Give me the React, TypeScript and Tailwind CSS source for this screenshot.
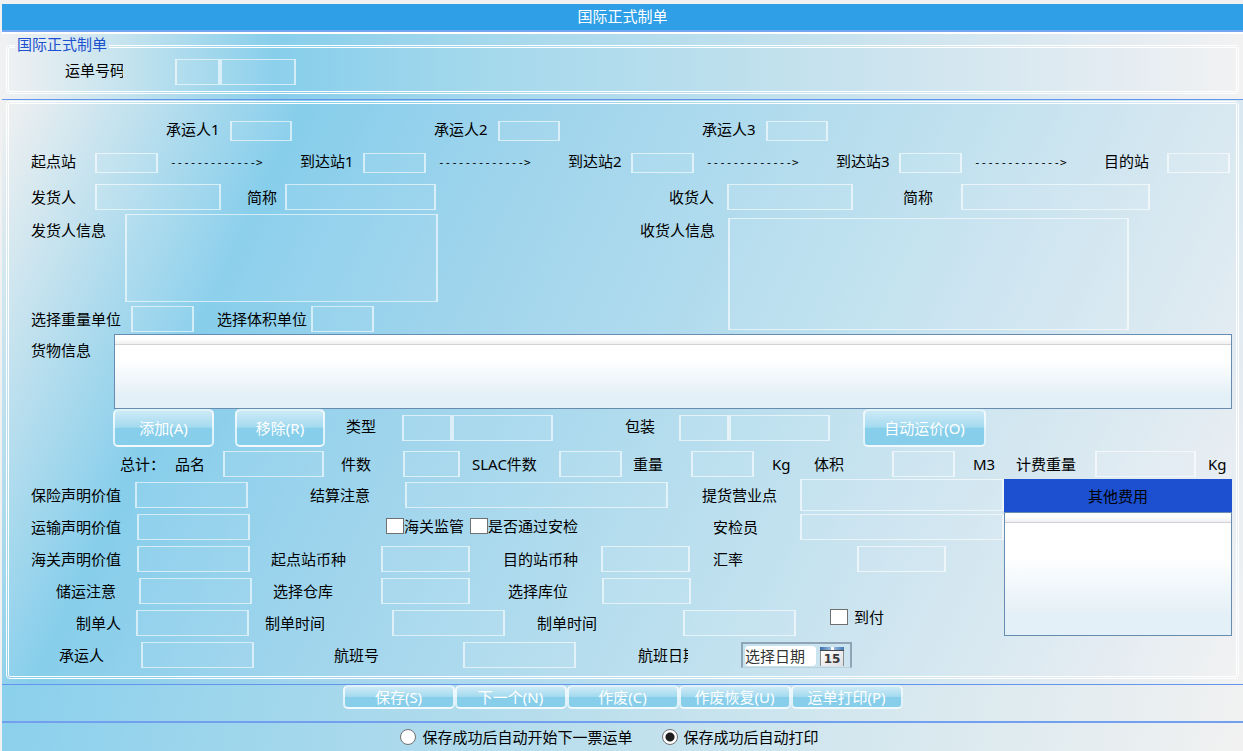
import { useId, useState } from 'react';
import type { ReactNode } from 'react';
import clsx from 'clsx';

const FIELD = 'block w-full min-w-0 border-x-2 border-y border-white/60 bg-white/5 px-1 text-[15px] leading-5 outline-none';

function Field({ label }: { label: string }) {
  return <input type="text" aria-label={label} className={clsx(FIELD, 'h-[26px]')} />;
}

function Pair({ label, className, cut, children, short, tall }: {
  label: string; className?: string; cut?: boolean; children?: ReactNode; short?: boolean; tall?: boolean;
}) {
  const id = useId();
  return (
    <>
      <label htmlFor={id} className={clsx('whitespace-nowrap', short && 'h-5 leading-4', className)}>
        <span className={clsx('block', cut && 'w-[50px] overflow-hidden')}>{label}</span>
      </label>
      {children ?? <input id={id} type="text" className={clsx(FIELD, short ? 'h-5' : tall ? 'h-8' : 'h-[26px]')} />}
    </>
  );
}

function Area({ label, className, height }: { label: string; className?: string; height: string }) {
  const id = useId();
  return (
    <>
      <label htmlFor={id} className={clsx('whitespace-nowrap', className)}>{label}</label>
      <textarea id={id} className={clsx(FIELD, 'resize-none', height)} />
    </>
  );
}

function Check({ label, gap }: { label: string; gap?: boolean }) {
  return (
    <label className={clsx('flex items-center whitespace-nowrap', gap && 'gap-1.5')}>
      <input type="checkbox" className="h-4 w-[18px] shrink-0 appearance-none border border-[#707070] bg-white checked:bg-[#2f9fe7]" />
      {label}
    </label>
  );
}

function GlassButton({ children, className }: { children: ReactNode; className?: string }) {
  return (
    <button
      type="button"
      className={clsx(
        'rounded-[5px] border-2 border-white/75 bg-[linear-gradient(to_bottom,#cdeaf6_0%,#a3daef_48%,#87ceeb_50%,#87ceeb_100%)] whitespace-nowrap text-white',
        className,
      )}
    >
      {children}
    </button>
  );
}

function Listing({ label, className }: { label: string; className?: string }) {
  return (
    <div
      role="region"
      aria-label={label}
      className={clsx('border border-[#688caf] bg-[linear-gradient(to_bottom,#ffffff_35%,#e4f0f7_82%)]', className)}
    >
      <div className="h-[10px] border-b border-[#d0d2d6] bg-[linear-gradient(to_bottom,#ffffff_40%,#eeeff1)]" />
    </div>
  );
}

function Arrow() {
  return <span className="pl-3 font-['DejaVu_Sans_Mono',monospace] text-[11px] whitespace-nowrap">{'------------->'}</span>;
}

function DateBox({ id }: { id: string }) {
  return (
    <div className="flex h-[26px] items-center border-2 border-b border-[#8fa5b5] border-b-[#bdd0da] pr-1.5 pl-0.5">
      <input id={id} type="text" aria-label="航班日期" placeholder="选择日期" className="h-5 w-full min-w-0 rounded-sm bg-white text-[15px] leading-5 outline-none placeholder:text-[#333]" />
      <button type="button" aria-label="打开日历" className="ml-1 shrink-0">
        <svg width="24" height="20" viewBox="0 0 24 20">
          <defs>
            <linearGradient id="cal-top" x1="0" y1="0" x2="1" y2="0">
              <stop offset="0" stopColor="#3a6fae" />
              <stop offset="0.5" stopColor="#9fc1e2" />
              <stop offset="1" stopColor="#4178b5" />
            </linearGradient>
            <linearGradient id="cal-page" x1="0" y1="0" x2="1" y2="1">
              <stop offset="0" stopColor="#fff" />
              <stop offset="1" stopColor="#dcdde2" />
            </linearGradient>
          </defs>
          <rect x="0" y="1" width="24" height="19" fill="#8c8c8c" />
          <rect x="1" y="5" width="22" height="15" fill="url(#cal-page)" />
          <rect x="0" y="1" width="24" height="3" fill="url(#cal-top)" />
          <rect x="0" y="4" width="24" height="1" fill="#4b4b4b" />
          <rect x="11" y="1" width="3" height="3" fill="#fff" />
          <text x="12" y="17" textAnchor="middle" fontSize="12" fontWeight="700" fontFamily="DejaVu Sans, sans-serif" fill="#3a3a3a">15</text>
        </svg>
      </button>
    </div>
  );
}

const ROW = 'grid items-center';

const ACTIONS = ['保存(S)', '下一个(N)', '作废(C)', '作废恢复(U)', '运单打印(P)'];

const AFTER_SAVE = [
  { value: 'next', label: '保存成功后自动开始下一票运单' },
  { value: 'print', label: '保存成功后自动打印' },
];

function Header() {
  return (
    <section className="bg-[linear-gradient(to_right,#f0f1f2_0%,#c4e3ee_10%,#87ceeb_22%,#a3d8ec_38%,#c3e1ed_64%,#e4ecf2_90%,#f2f2f2_100%)] px-1 pt-1 pb-[5px]">
      <fieldset className="h-[56px] rounded border-3 border-double border-white px-1.5">
        <legend className="h-4 px-0.5 leading-3 text-[#1c50d0]">国际正式制单</legend>
        <div className={clsx(ROW, 'mt-[5px] grid-cols-[110px_45px_76px] pl-[50px]')}>
          <label htmlFor="waybill-no" className="w-[58px] overflow-hidden pb-1 whitespace-nowrap">运单号码</label>
          <input id="waybill-no" type="text" className={clsx(FIELD, 'h-[26px]')} />
          <Field label="运单号码后段" />
        </div>
      </fieldset>
    </section>
  );
}

function Routing() {
  return (
    <>
      <div className={clsx(ROW, 'mt-[17px] grid-cols-[199px_62fr_206px_62fr_206px_62fr_404fr]')}>
        <Pair label="承运人1" className="pl-[135px]" short />
        <Pair label="承运人2" className="pl-[142px]" short />
        <Pair label="承运人3" className="pl-[142px]" short />
      </div>
      <div className={clsx(ROW, 'mt-3 grid-cols-[64px_63fr_142px_63px_63fr_142px_63px_63fr_142px_63px_63fr_142px_63px_63fr] pr-0.5')}>
        <Pair label="起点站" short />
        <Arrow />
        <Pair label="到达站1" short />
        <Arrow />
        <Pair label="到达站2" short />
        <Arrow />
        <Pair label="到达站3" short />
        <Arrow />
        <Pair label="目的站" short />
      </div>
      <div className={clsx(ROW, 'mt-[11px] grid-cols-[64px_126fr_64px_151fr_291px_126fr_108px_189fr_82fr]')}>
        <Pair label="发货人" />
        <Pair label="简称" className="pl-[26px]" />
        <Pair label="收货人" className="pl-[233px]" />
        <Pair label="简称" className="pl-[50px]" />
      </div>
    </>
  );
}

function Parties() {
  return (
    <div className="mt-1 grid grid-cols-[407fr_794fr]">
      <div>
        <div className="grid grid-cols-[94px_1fr]">
          <Area label="发货人信息" className="pt-1.5" height="h-[88px]" />
        </div>
        <div className={clsx(ROW, 'mt-1 grid-cols-[100px_63fr_117px_63fr_64fr]')}>
          <Pair label="选择重量单位" />
          <Pair label="选择体积单位" className="pl-[23px]" />
        </div>
      </div>
      <div className="mt-1 grid grid-cols-[290px_401fr_103fr] items-start">
        <Area label="收货人信息" className="pt-0.5 pl-[202px]" height="h-[112px]" />
      </div>
    </div>
  );
}

function Goods() {
  return (
    <>
      <div className="mt-0.5 grid grid-cols-[83px_1fr]">
        <span className="pt-1.5">货物信息</span>
        <Listing label="货物信息" className="h-[75px]" />
      </div>
      <div className={clsx(ROW, 'grid-cols-[183px_111px_77px_50fr_101fr_126px_50fr_101fr_156px_246fr]')}>
        <GlassButton className="ml-[82px] h-[38px]">添加(A)</GlassButton>
        <GlassButton className="ml-[21px] h-[38px]">移除(R)</GlassButton>
        <Pair label="类型" className="pb-1 pl-[21px]" />
        <Field label="类型名称" />
        <Pair label="包装" className="pb-1 pl-[72px]" />
        <Field label="包装名称" />
        <GlassButton className="ml-[33px] h-[38px]">自动运价(O)</GlassButton>
      </div>
      <div className={clsx(ROW, 'mt-1 grid-cols-[144px_48px_101fr_79px_57fr_99px_63fr_69px_63fr_60px_78px_63fr_61px_79px_101fr_36px]')}>
        <span className="pl-[89px] whitespace-nowrap">总计：</span>
        <Pair label="品名" />
        <Pair label="件数" className="pl-[17px]" />
        <Pair label="SLAC件数" className="pl-3" />
        <Pair label="重量" className="pl-[11px]" />
        <span className="pl-[18px]">Kg</span>
        <Pair label="体积" />
        <span className="pl-[18px]">M3</span>
        <Pair label="计费重量" />
        <span className="pl-3">Kg</span>
      </div>
    </>
  );
}

function Details() {
  return (
    <div className="mt-0.5 grid grid-cols-[973fr_228fr]">
      <div>
        <div className={clsx(ROW, 'h-8 grid-cols-[104px_113fr_157px_263fr_132px_204fr]')}>
          <Pair label="保险声明价值" />
          <Pair label="结算注意" className="pl-[62px]" />
          <Pair label="提货营业点" className="pl-[34px]" tall />
        </div>
        <div className={clsx(ROW, 'h-8 grid-cols-[106px_113fr_463px_87px_204fr]')}>
          <Pair label="运输声明价值" />
          <div className="flex gap-1.5 pb-0.5 pl-[136px]">
            <Check label="海关监管" />
            <Check label="是否通过安检" />
          </div>
          <Pair label="安检员" />
        </div>
        <div className={clsx(ROW, 'h-8 grid-cols-[106px_113fr_131px_89fr_131px_89fr_167px_89fr_58fr]')}>
          <Pair label="海关声明价值" />
          <Pair label="起点站币种" className="pl-[21px]" />
          <Pair label="目的站币种" className="pl-[33px]" />
          <Pair label="汇率" className="pl-[23px]" />
        </div>
        <div className={clsx(ROW, 'h-8 grid-cols-[108px_113fr_129px_89fr_132px_89fr_313fr]')}>
          <Pair label="储运注意" className="pl-[25px]" />
          <Pair label="选择仓库" className="pl-[21px]" />
          <Pair label="选择库位" className="pl-[38px]" />
        </div>
        <div className={clsx(ROW, 'h-8 grid-cols-[105px_113fr_143px_113fr_178px_113fr_208px]')}>
          <Pair label="制单人" className="pl-[45px]" />
          <Pair label="制单时间" className="pl-4" />
          <Pair label="制单时间" className="pl-8" />
          <div className="self-start pl-[34px]">
            <Check label="到付" gap />
          </div>
        </div>
        <div className={clsx(ROW, 'h-8 grid-cols-[110px_113fr_209px_113fr_50px_115px_111px_152fr]')}>
          <Pair label="承运人" className="pl-[28px]" />
          <Pair label="航班号" className="pl-[80px]" />
          <label htmlFor="flight-date" className="col-span-2 pl-[62px] whitespace-nowrap">
            <span className="block w-[50px] overflow-hidden">航班日期</span>
          </label>
          <DateBox id="flight-date" />
        </div>
      </div>
      <div>
        <h2 className="flex h-[33px] items-center justify-center bg-[#1c50d0]">其他费用</h2>
        <Listing label="其他费用" className="h-[124px]" />
      </div>
    </div>
  );
}

export default function App() {
  const [afterSave, setAfterSave] = useState('print');

  return (
    <div className="min-h-screen bg-[#f1f1f1] pt-1 pl-0.5 font-['Noto_Sans','Noto_Sans_CJK_SC',sans-serif] text-[15px] leading-5 text-black">
      <h1 className="flex h-[26px] items-center justify-center bg-[#2f9fe7] pb-0.5 text-white">国际正式制单</h1>
      <div className="h-1 border-t-2 border-[#73a5f0] bg-white" />
      <Header />
      <div className="h-px bg-[#6495ed]" />
      <main className="bg-[linear-gradient(115deg,#f1f1f1_0%,#87ceeb_20%,#9bd3ec_33%,#bbdfee_60%,#e4ecf2_90%,#f2f2f2_100%)] px-1 pt-px pb-[5px]">
        <div className="rounded border-3 border-double border-white pr-1 pb-[5px] pl-[22px]">
          <Routing />
          <Parties />
          <Goods />
          <Details />
        </div>
      </main>
      <footer className="bg-[linear-gradient(100deg,#8bd0ec_0%,#b3dcec_40%,#d0e6ee_65%,#f1f1f1_100%)]">
        <div className="flex h-[37px] items-start justify-center border-t border-[#6495ed]">
          {ACTIONS.map(a => (
            <GlassButton key={a} className="h-6 w-28 leading-5">{a}</GlassButton>
          ))}
        </div>
        <div className="flex h-[30px] items-center justify-center gap-[29px] border-t-2 border-[#73a0ee] pr-[26px]">
          {AFTER_SAVE.map(o => (
            <label key={o.value} className="flex items-center gap-1.5 whitespace-nowrap">
              <input
                type="radio"
                name="after-save"
                checked={afterSave === o.value}
                onChange={() => setAfterSave(o.value)}
                className="size-4 appearance-none rounded-full border border-[#707070] bg-white checked:bg-[radial-gradient(circle,#1e1e1e_0_4px,#ffffff_5px)]"
              />
              {o.label}
            </label>
          ))}
        </div>
      </footer>
    </div>
  );
}
